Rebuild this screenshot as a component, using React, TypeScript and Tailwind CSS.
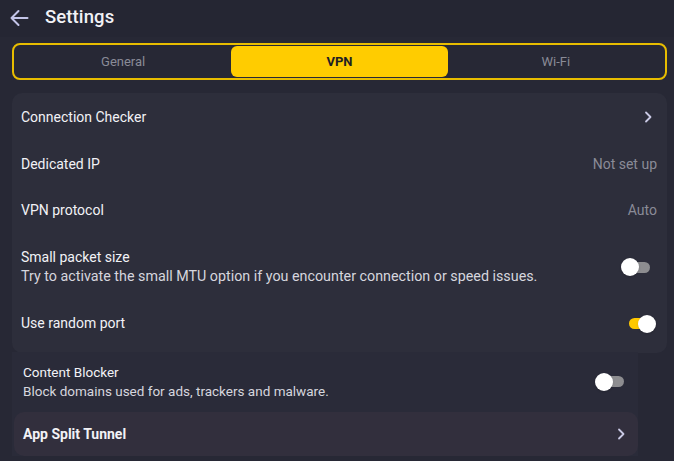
import React from "react";

function Chevron() {
  return (
    <svg width="8" height="12" viewBox="0 0 8 12" fill="none">
      <path d="M2 1.5 6.5 6 2 10.5" stroke="#c9c9e4" strokeWidth="1.8" strokeLinecap="round" strokeLinejoin="round" />
    </svg>
  );
}

function Toggle({ on }: { on: boolean }) {
  return (
    <div className="relative w-[26px] h-[18px] flex items-center">
      <div className={`w-[24px] h-[11px] rounded-full ml-[1px] ${on ? "bg-[#ffc800]" : "bg-[#8d8d90]"}`} />
      <div
        className={`absolute top-0 w-[18px] h-[18px] rounded-full bg-white shadow ${on ? "left-[10px]" : "left-[-4px]"}`}
      />
    </div>
  );
}

export default function App() {
  return (
    <div className="w-[674px] h-[461px] overflow-hidden bg-[#272835] font-['Roboto',sans-serif] text-[#f2f2f6]">
      <div className="h-[37px] flex items-center pl-[9px] gap-[16px] bg-[#252633]">
        <svg width="20" height="18" viewBox="0 0 20 18" fill="none" className="-mt-[1px]">
          <path d="M18.5 9H2.5M9.5 2 2.5 9l7 7" stroke="#c3c4e8" strokeWidth="2" strokeLinecap="round" strokeLinejoin="round" />
        </svg>
        <span className="text-[18.5px] font-medium tracking-[0.1px] -mt-[2px]">Settings</span>
      </div>

      <div className="ml-[12px] mr-[7px] mt-[6px] h-[37px] rounded-[8px] border-2 border-[#e8bd00] flex items-stretch p-[1px]">
        <div className="flex-1 flex items-center justify-center text-[13px] text-[#8a8b97]">General</div>
        <div className="flex-1 flex items-center justify-center text-[13px] font-bold text-[#1e1e24] bg-[#ffcc00] rounded-[6px]">
          VPN
        </div>
        <div className="flex-1 flex items-center justify-center text-[13px] text-[#8a8b97]">Wi-Fi</div>
      </div>

      <div className="ml-[12px] mr-[7px] mt-[13px] rounded-[10px] bg-[#2d2e3b] pb-[6px] text-[14px]">
        <div className="h-[48px] flex items-center justify-between pl-[9px] pr-[15px]">
          <span>Connection Checker</span>
          <Chevron />
        </div>
        <div className="h-[46px] flex items-center justify-between pl-[9px] pr-[10px]">
          <span>Dedicated IP</span>
          <span className="text-[#8a8b97]">Not set up</span>
        </div>
        <div className="h-[47px] flex items-center justify-between pl-[9px] pr-[10px]">
          <span>VPN protocol</span>
          <span className="text-[#8a8b97]">Auto</span>
        </div>
        <div className="h-[66px] flex items-center justify-between pl-[9px] pr-[16px]">
          <div className="flex flex-col leading-[19px]">
            <span>Small packet size</span>
            <span className="text-[14.3px] text-[#d6d6de]">
              Try to activate the small MTU option if you encounter connection or speed issues.
            </span>
          </div>
          <Toggle on={false} />
        </div>
        <div className="h-[47px] flex items-center justify-between pl-[9px] pr-[13px]">
          <span>Use random port</span>
          <Toggle on />
        </div>
      </div>

      <div className="ml-[12px] w-[626px] bg-[#2a2b39] text-[14px]">
        <div className="h-[59px] flex items-center justify-between pl-[11px] pr-[13px] -mt-[1px]">
          <div className="flex flex-col leading-[19px]">
            <span className="text-[13.5px]">Content Blocker</span>
            <span className="text-[13.5px] text-[#d6d6de]">Block domains used for ads, trackers and malware.</span>
          </div>
          <Toggle on={false} />
        </div>
        <div className="ml-[2px] mt-[1px] h-[44px] rounded-[10px] bg-[#322f3d] flex items-center justify-between pl-[9px] pr-[13px]">
          <span className="font-bold text-[14px]">App Split Tunnel</span>
          <Chevron />
        </div>
      </div>
    </div>
  );
}
